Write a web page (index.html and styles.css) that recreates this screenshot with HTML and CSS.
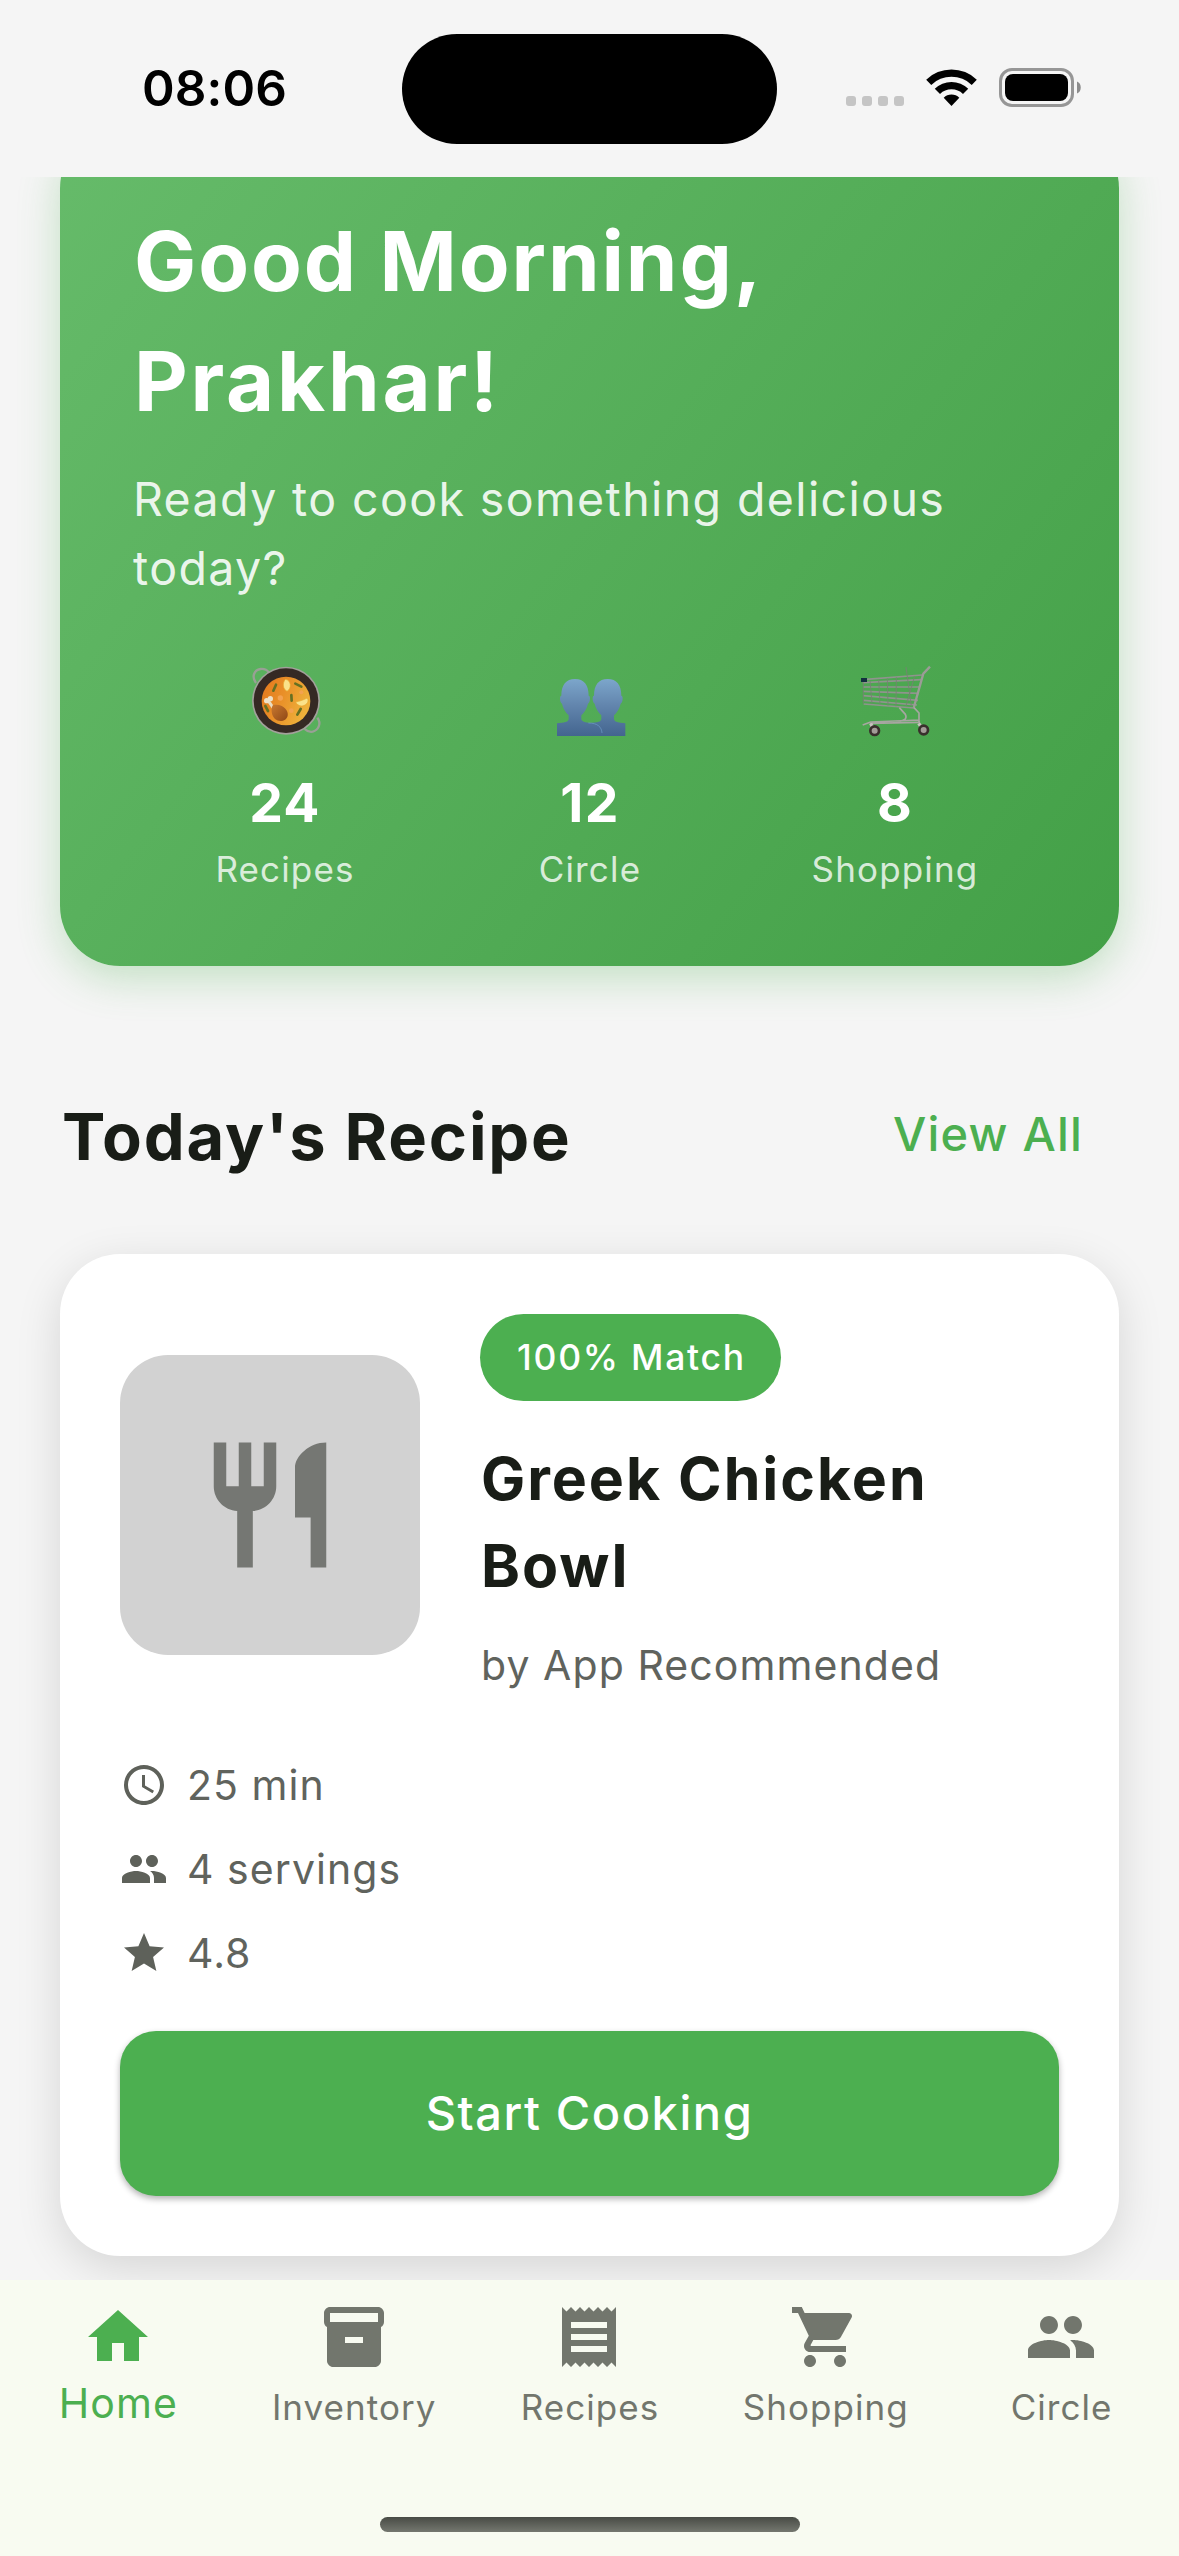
FILE: index.html
```html
<!DOCTYPE html>
<html lang="en">
<head>
<meta charset="utf-8">
<title>Recipes Home</title>
<link rel="stylesheet" href="styles.css">
</head>
<body>
<div class="screen">
  <header class="status">
    <div class="status-time">08:06</div>
    <div class="island"></div>
    <div class="status-icons">
      <div class="dots"><i></i><i></i><i></i><i></i></div>
      <svg class="wifi" viewBox="-77 -111 154 114">
        <path d="M-76.4-79.1A110 110 0 0 1 76.4-79.1L61.1-63.3A88 88 0 0 0-61.1-63.3Z"/>
        <path d="M-50.5-51.8A72 72 0 0 1 50.5-51.8L34.7-36A50 50 0 0 0-34.7-36Z"/>
        <path d="M-23.6-24.5A34 34 0 0 1 23.6-24.5L0 0Z"/>
      </svg>
      <svg class="battery" viewBox="0 0 83 39">
        <rect x="1.5" y="1.5" width="72" height="36" rx="11.5" fill="none" stroke="#969696" stroke-width="3"/>
        <rect x="6" y="6" width="63" height="27" rx="8"/>
        <path d="M78 13.5c5 1.500 5 10.500 0 12z" fill="#8c8c8c"/>
      </svg>
    </div>
  </header>

  <main class="content">
    <section class="hero">
      <h1 class="hero-title"><span class="line">Good Morning,</span><span class="line line-name">Prakhar!</span></h1>
      <p class="hero-sub">Ready to cook something delicious today?</p>
      <div class="stats">
        <div class="stat">
          <svg class="emoji" viewBox="0 0 270 270">
            <defs>
              <linearGradient id="curry" x1="0" y1="0" x2="1" y2=".4"><stop offset="0" stop-color="#e2761c"/><stop offset=".5" stop-color="#e98f28"/><stop offset="1" stop-color="#eeb03a"/></linearGradient>
              <linearGradient id="leg" x1="0" y1="0" x2="1" y2="1"><stop offset="0" stop-color="#c8782f"/><stop offset="1" stop-color="#8f4716"/></linearGradient>
            </defs>
            <g fill="none" stroke="#99a095" stroke-width="7">
              <path d="M48 84C34 66 42 44 62 42c12-1 20 4 24 10"/>
              <path d="M232 188c14 18 2 38-14 42-12 2-18-2-24-8"/>
            </g>
            <circle cx="138" cy="137" r="102" fill="#a2a19b"/>
            <circle cx="138" cy="137" r="97" fill="#352924"/>
            <circle cx="138" cy="138" r="73" fill="url(#curry)"/>
            <g stroke="#667022" stroke-width="8" stroke-linecap="round">
              <path d="M108 89l-8 18M166 86l18 9M154 120l1 17M76 153l8 15M182 162l-10 17"/>
            </g>
            <g fill="#f3a250"><circle cx="121" cy="129" r="8"/><circle cx="184" cy="112" r="6"/><circle cx="154" cy="167" r="7"/></g>
            <path d="M136 73c18 2 20 28 5 36-13-7-14-25-5-36z" fill="#fae28a" stroke="#e8a62a" stroke-width="2"/>
            <path d="M167 141c10-2 24-6 34-12 11 12-8 26-18 24-8-1-13-6-16-12z" fill="#fae28a" stroke="#e8a62a" stroke-width="2"/>
            <path d="M86 139l14 20" stroke="#eadcc0" stroke-width="9"/>
            <circle cx="80" cy="137" r="8" fill="#eee2ca"/><circle cx="91" cy="131" r="8" fill="#eee2ca"/>
            <path d="M99 150c28-6 48 16 44 32-4 18-26 20-38 10-10-10-14-30-6-42z" fill="url(#leg)"/>
          </svg>
          <strong class="stat-value">24</strong><span class="stat-label">Recipes</span>
        </div>
        <div class="stat">
          <svg class="emoji" viewBox="0 0 270 270">
            <defs><linearGradient id="bust" gradientUnits="userSpaceOnUse" x1="0" y1="72" x2="0" y2="243"><stop offset="0" stop-color="#7ca6cb"/><stop offset=".45" stop-color="#6386ae"/><stop offset="1" stop-color="#43658f"/></linearGradient></defs>
            <path d="M188 72c27 0 41 18 41 50 6 0 5 20-2 24-3 15-12 27-20 35v12c2 9 14 10 34 12v38H122v-38c28-2 45-2 47-12v-12c-8-8-17-20-20-35-7-4-8-24-2-24 0-32 14-50 41-50z" fill="url(#bust)"/>
            <path d="M90 72c27 0 41 18 41 50 6 0 5 20-2 24-3 15-12 27-20 35v12c2 9 18 10 37 13 18 4 24 20 25 37H36v-38c22-2 33-3 35-12v-12c-8-8-17-20-20-35-7-4-8-24-2-24 0-32 14-50 41-50z" fill="url(#bust)"/>
            <path d="M130 204c28 0 40 12 41 30" fill="none" stroke="#6f9dca" stroke-width="2"/>
          </svg>
          <strong class="stat-value">12</strong><span class="stat-label">Circle</span>
        </div>
        <div class="stat">
          <svg class="emoji" viewBox="0 0 270 270">
            <g fill="none" stroke="#8f948d" stroke-width="4" stroke-linejoin="round">
              <path d="M38 74L216 60M38 83l176-9M39 96l171 0M40 109l167 6M40 122l164 14M41 136l160 14M41 147l151 12" stroke-width="5"/>
              <path d="M60 76l6 70M86 73l4 75M112 70l2 82M139 67l-1 87M168 36l16 118M194 63l-26 90M40 82v64" stroke-width="2.500" stroke="#778074"/>
            </g>
            <path d="M240 35l-20 21-29 103" fill="none" stroke="#9b9c96" stroke-width="7"/>
            <path d="M148 158l18 20c6 12-2 18-14 20M192 158l15 16v26M38 210l24-9 146-6M60 205l150-3" fill="none" stroke="#a7a6a1" stroke-width="5"/>
            <path d="M62 205l10 22M206 205l14 20" stroke="#c8c3bf" stroke-width="10"/>
            <g fill="#a39d98" stroke="#39302c" stroke-width="8"><circle cx="74" cy="227" r="13"/><circle cx="221" cy="225" r="13"/></g>
            <rect x="33" y="69" width="18" height="12" fill="#12303f"/>
          </svg>
          <strong class="stat-value">8</strong><span class="stat-label">Shopping</span>
        </div>
      </div>
    </section>

    <div class="section-head">
      <h2 class="section-title">Today's Recipe</h2>
      <a class="view-all">View All</a>
    </div>

    <article class="recipe">
      <div class="recipe-top">
        <div class="thumb">
          <svg class="thumb-icon" viewBox="0 0 24 24"><path d="M11 9H9V2H7v7H5V2H3v7c0 2.120 1.660 3.840 3.750 3.970V22h2.500v-9.030C11.340 12.840 13 11.120 13 9V2h-2v7zm5-3v8h2.500v8H21V2c-2.760 0-5 2.240-5 4z"/></svg>
        </div>
        <div class="recipe-info">
          <span class="badge">100% Match</span>
          <h3 class="recipe-title">Greek Chicken Bowl</h3>
          <p class="recipe-by">by App Recommended</p>
        </div>
      </div>
      <ul class="meta">
        <li class="meta-row"><svg class="meta-icon" viewBox="0 0 24 24"><path d="M11.990 2C6.470 2 2 6.480 2 12s4.470 10 9.990 10C17.520 22 22 17.520 22 12S17.520 2 11.990 2zM12 20c-4.420 0-8-3.580-8-8s3.580-8 8-8 8 3.580 8 8-3.580 8-8 8zM12.500 7H11v6l5.250 3.150.750-1.230-4.500-2.670z"/></svg>25 min</li>
        <li class="meta-row"><svg class="meta-icon" viewBox="0 0 24 24"><path d="M16 11c1.660 0 2.990-1.340 2.990-3S17.660 5 16 5c-1.660 0-3 1.340-3 3s1.340 3 3 3zm-8 0c1.660 0 2.990-1.340 2.990-3S9.660 5 8 5C6.340 5 5 6.340 5 8s1.340 3 3 3zm0 2c-2.330 0-7 1.170-7 3.500V19h14v-2.500c0-2.330-4.670-3.500-7-3.500zm8 0c-.290 0-.620.020-.970.050 1.160.840 1.970 1.970 1.970 3.450V19h6v-2.500c0-2.330-4.670-3.500-7-3.500z"/></svg>4 servings</li>
        <li class="meta-row"><svg class="meta-icon" viewBox="0 0 24 24"><path d="M12 17.270L18.180 21l-1.640-7.030L22 9.240l-7.190-.610L12 2 9.190 8.630 2 9.240l5.460 4.730L5.820 21z"/></svg>4.8</li>
      </ul>
      <button class="cook">Start Cooking</button>
    </article>
  </main>

  <nav class="tabs">
    <a class="tab tab-active"><svg class="tab-icon" viewBox="0 0 24 24"><path d="M10 20v-6h4v6h5v-8h3L12 3 2 12h3v8z"/></svg><span class="tab-label">Home</span></a>
    <a class="tab"><svg class="tab-icon" viewBox="0 0 24 24"><path d="M20 2H4c-1 0-2 .9-2 2v3.010c0 .720.430 1.340 1 1.690V20c0 1.100 1.100 2 2 2h14c.9 0 2-.9 2-2V8.700c.570-.350 1-.970 1-1.690V4c0-1.100-1-2-2-2zm-5 12H9v-2h6v2zm5-7H4V4h16v3z"/></svg><span class="tab-label">Inventory</span></a>
    <a class="tab"><svg class="tab-icon" viewBox="0 0 24 24"><path d="M18 17H6v-2h12v2zm0-4H6v-2h12v2zm0-4H6V7h12v2zM3 22l1.500-1.500L6 22l1.500-1.500L9 22l1.500-1.500L12 22l1.500-1.500L15 22l1.500-1.500L18 22l1.500-1.500L21 22V2l-1.500 1.500L18 2l-1.500 1.500L15 2l-1.500 1.500L12 2l-1.500 1.500L9 2 7.500 3.500 6 2 4.500 3.500 3 2v20z"/></svg><span class="tab-label">Recipes</span></a>
    <a class="tab"><svg class="tab-icon" viewBox="0 0 24 24"><path d="M7 18c-1.100 0-1.990.9-1.990 2S5.900 22 7 22s2-.9 2-2-.9-2-2-2zM1 2v2h2l3.600 7.590-1.350 2.450c-.160.280-.250.610-.250.960 0 1.100.9 2 2 2h12v-2H7.420c-.140 0-.250-.110-.250-.250l.030-.120.9-1.630h7.450c.750 0 1.410-.410 1.750-1.030l3.580-6.490c.080-.140.120-.310.120-.480 0-.550-.450-1-1-1H5.210l-.940-2H1zm16 16c-1.100 0-1.990.9-1.990 2s.890 2 1.990 2 2-.9 2-2-.9-2-2-2z"/></svg><span class="tab-label">Shopping</span></a>
    <a class="tab"><svg class="tab-icon" viewBox="0 0 24 24"><path d="M16 11c1.660 0 2.990-1.340 2.990-3S17.660 5 16 5c-1.660 0-3 1.340-3 3s1.340 3 3 3zm-8 0c1.660 0 2.990-1.340 2.990-3S9.660 5 8 5C6.340 5 5 6.340 5 8s1.340 3 3 3zm0 2c-2.330 0-7 1.170-7 3.500V19h14v-2.500c0-2.330-4.670-3.500-7-3.500zm8 0c-.290 0-.620.020-.970.050 1.160.840 1.970 1.970 1.970 3.450V19h6v-2.500c0-2.330-4.670-3.500-7-3.500z"/></svg><span class="tab-label">Circle</span></a>
    <div class="home-indicator"></div>
  </nav>
</div>
</body>
</html>
```
FILE: styles.css
```css
* { box-sizing: border-box; margin: 0; padding: 0; }

body {
  font-family: Inter, "Liberation Sans", sans-serif;
  background: #f5f5f5;
}

svg { display: block; flex: none; }

.screen {
  width: 1179px;
  height: 2556px;
  display: flex;
  flex-direction: column;
  overflow: hidden;
}

/* Status bar */
.status {
  flex: none;
  height: 177px;
  display: grid;
  grid-template-columns: 402px 375px 402px;
}
.status-time {
  padding: 58px 0 0 142px;
  font-size: 49.5px;
  line-height: 60px;
  font-weight: 600;
  letter-spacing: 0.1px;
  color: #000;
}
.island {
  height: 110px;
  margin-top: 34px;
  border-radius: 55px;
  background: #000;
}
.status-icons {
  display: flex;
  align-items: flex-end;
  height: 107px;
  padding-left: 69px;
}
.dots { display: flex; gap: 6px; padding-bottom: 1px; }
.dots i { width: 10px; height: 10px; border-radius: 3px; background: #c5c5c5; }
.wifi { width: 51px; height: 38px; margin-left: 22px; }
.battery { width: 83px; height: 39px; margin-left: 22px; }

/* Scrolling content */
.content {
  height: 2103px;
  flex: none;
  overflow: hidden;
  padding: 0 60px;
}

.hero {
  margin-top: -49px;
  height: 838px;
  padding: 73px 72px 0;
  border-radius: 60px;
  background: linear-gradient(128.35deg, #66bb6a, #43a047);
  box-shadow: 0 12px 42px rgba(76, 175, 80, 0.3);
  color: #fff;
}
.hero-title {
  padding-left: 2px;
  font-size: 83px;
  line-height: 120px;
  font-weight: 700;
  letter-spacing: 1.9px;
}
.line { display: block; }
.line-name { letter-spacing: 2.8px; }
.hero-sub {
  margin-top: 24px;
  padding-left: 1px;
  font-size: 46.5px;
  line-height: 69px;
  letter-spacing: 1.38px;
  color: rgba(255, 255, 255, 0.9);
}
.stats {
  margin-top: 52px;
  display: grid;
  grid-template-columns: repeat(3, 1fr);
}
.stat {
  display: flex;
  flex-direction: column;
  align-items: center;
}
.emoji { width: 90px; height: 90px; }
.stat-value {
  margin-top: 28px;
  padding-left: 1px;
  font-size: 53.5px;
  line-height: 60px;
  letter-spacing: 1.3px;
}
.stat-label {
  margin-top: 12px;
  padding-left: 1px;
  font-size: 35px;
  line-height: 48px;
  letter-spacing: 1.15px;
  color: rgba(255, 255, 255, 0.8);
}

.section-head {
  margin-top: 129px;
  padding-right: 36px;
  display: flex;
  align-items: center;
  justify-content: space-between;
}
.section-title {
  padding-left: 2px;
  font-size: 65px;
  line-height: 84px;
  letter-spacing: 1.8px;
  color: #191d17;
}
.view-all {
  padding-bottom: 6px;
  font-size: 47px;
  line-height: 60px;
  font-weight: 550;
  letter-spacing: 1.2px;
  color: #4caf50;
}

/* Recipe card */
.recipe {
  margin-top: 75px;
  padding: 60px;
  border-radius: 60px;
  background: #fff;
  box-shadow: 0 12px 45px rgba(0, 0, 0, 0.13);
}
.recipe-top {
  display: flex;
  align-items: center;
  gap: 60px;
}
.thumb {
  width: 300px;
  height: 300px;
  border-radius: 48px;
  background: #d2d2d2;
  display: flex;
  align-items: center;
  justify-content: center;
}
.thumb-icon { width: 150px; height: 150px; fill: #757773; }
.recipe-info {
  flex: 1;
  display: flex;
  flex-direction: column;
  align-items: flex-start;
}
.badge {
  padding: 0 35px 0 37px;
  border-radius: 44px;
  background: #4caf50;
  color: #fff;
  font-size: 35.5px;
  line-height: 87px;
  font-weight: 550;
  letter-spacing: 1.75px;
}
.recipe-title {
  margin-top: 34px;
  padding-left: 1px;
  font-size: 59px;
  line-height: 87px;
  letter-spacing: 1.95px;
  color: #191d17;
}
.recipe-by {
  margin-top: 26px;
  padding-left: 1px;
  font-size: 41px;
  line-height: 60px;
  letter-spacing: 1.08px;
  color: #60635d;
}
.meta {
  margin-top: 60px;
  display: flex;
  flex-direction: column;
  gap: 24px;
  list-style: none;
}
.meta-row {
  display: flex;
  align-items: center;
  gap: 19px;
  font-size: 41px;
  line-height: 60px;
  letter-spacing: 1.05px;
  color: #60635d;
}
.meta-icon { width: 48px; height: 48px; fill: #5e615a; }
.cook {
  display: block;
  width: 100%;
  height: 165px;
  margin-top: 48px;
  padding-bottom: 2px;
  border: 0;
  border-radius: 36px;
  background: #4caf50;
  box-shadow: 0 3px 6px rgba(0, 0, 0, 0.3);
  color: #fff;
  font: 550 47px/60px Inter, "Liberation Sans", sans-serif;
  letter-spacing: 1.55px;
}

/* Bottom navigation */
.tabs {
  flex: none;
  height: 276px;
  display: grid;
  grid-template-columns: repeat(5, 1fr);
  grid-template-rows: 237px 15px;
  background: #f8fbf1;
}
.tab {
  padding-top: 21px;
  display: flex;
  flex-direction: column;
  align-items: center;
  color: #72766d;
}
.tab-icon { width: 72px; height: 72px; fill: currentColor; }
.tab-label {
  margin-top: 10px;
  padding-left: 1px;
  font-size: 35px;
  line-height: 48px;
  letter-spacing: 1.05px;
}
.tab-active { color: #4caf50; }
.tab-active .tab-label {
  margin-top: 6px;
  font-size: 41px;
  letter-spacing: 1.1px;
}
.home-indicator {
  grid-column: 1 / -1;
  justify-self: center;
  width: 420px;
  height: 15px;
  border-radius: 8px;
  background: linear-gradient(#484b45, #74776f);
}
```
